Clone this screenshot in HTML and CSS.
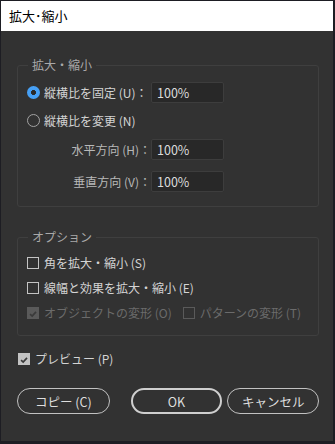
FILE: index.html
```html
<!DOCTYPE html>
<html lang="ja">
<head>
<meta charset="utf-8">
<link rel="stylesheet" href="styles.css">
</head>
<body>
<div class="window">
  <div class="titlebar">拡大･縮小</div>
  <div class="content">
    <fieldset class="group group-scale">
      <legend>拡大・縮小</legend>
      <div class="row row-uniform">
        <span class="radio radio-on"></span>
        <span class="label label-main">縦横比を固定 (U)：</span>
        <span class="field">100%</span>
      </div>
      <div class="row row-nonuniform">
        <span class="radio"></span>
        <span class="label label-main">縦横比を変更 (N)</span>
      </div>
      <div class="row row-h">
        <span class="label label-sub">水平方向 (H)：</span>
        <span class="field">100%</span>
      </div>
      <div class="row row-v">
        <span class="label label-sub">垂直方向 (V)：</span>
        <span class="field">100%</span>
      </div>
    </fieldset>
    <fieldset class="group group-options">
      <legend>オプション</legend>
      <div class="row check-row">
        <span class="check"></span>
        <span class="label label-main">角を拡大・縮小 (S)</span>
      </div>
      <div class="row check-row">
        <span class="check"></span>
        <span class="label label-main">線幅と効果を拡大・縮小 (E)</span>
      </div>
      <div class="row check-row disabled">
        <span class="check check-on check-dis"><svg viewBox="0 0 12 12" width="12" height="12"><path d="M2.5 6.2 L5 8.6 L9.6 3.4" fill="none" stroke="#3a3a3a" stroke-width="2"/></svg></span>
        <span class="label">オブジェクトの変形 (O)</span>
        <span class="check check-dis-empty second"></span>
        <span class="label">パターンの変形 (T)</span>
      </div>
    </fieldset>
    <div class="row preview-row">
      <span class="check check-on"><svg viewBox="0 0 12 12" width="12" height="12"><path d="M2.5 6.2 L5 8.6 L9.6 3.4" fill="none" stroke="#3a3a3a" stroke-width="2"/></svg></span>
      <span class="label label-main">プレビュー (P)</span>
    </div>
    <div class="buttons">
      <button class="btn btn-copy">コピー (C)</button>
      <button class="btn btn-ok">OK</button>
      <button class="btn btn-cancel">キャンセル</button>
    </div>
  </div>
</div>
</body>
</html>
```
FILE: styles.css
```css
* { box-sizing: border-box; }
html, body { margin: 0; padding: 0; }
body {
  background: #323232;
  font-family: "Noto Sans CJK JP", "Noto Sans", sans-serif;
  font-size: 12px;
  color: #d2d2d2;
}
.window {
  width: 335px;
  height: 444px;
  border-style: solid;
  border-color: #1d1d23;
  border-width: 1px 2px 3px 1px;
  background: #323232;
  display: flex;
  flex-direction: column;
}
.titlebar {
  height: 30px;
  background: #ffffff;
  color: #000000;
  font-size: 13px;
  line-height: 30px;
  padding-left: 8px;
}
.content {
  padding: 0 14px 0 16px;
  display: flex;
  flex-direction: column;
}
.group {
  margin: 0;
  border: 1px solid #3f3f3f;
  border-radius: 3px;
  padding: 0 0 0 9px;
  min-width: 0;
}
.group legend {
  padding: 0 4px;
  margin-left: 1px;
  color: #a9a9a9;
  font-size: 12px;
  line-height: 16px;
}
.group-scale {
  margin-top: 26px;
  padding-top: 9px;
  padding-bottom: 14px;
}
.group-options {
  margin-top: 22px;
  padding-top: 10px;
  padding-bottom: 14px;
}
.row {
  display: flex;
  align-items: center;
  height: 21px;
}
.row-nonuniform { margin-top: 7px; }
.row-h { margin-top: 8px; }
.row-v { margin-top: 11px; }
.label { white-space: nowrap; line-height: 16px; }
.label-main { color: #d4d4d4; }
.label-sub { color: #b8b8b8; }
.row-uniform .label { margin-left: 4px; width: 107px; }
.row-nonuniform .label { margin-left: 4px; }
.row-h .label, .row-v .label { width: 124px; text-align: right; }
.field {
  width: 73px;
  height: 21px;
  background: #282828;
  border: 1px solid #3d3d3d;
  border-radius: 2px;
  color: #dcdcdc;
  font-size: 12.5px;
  line-height: 19px;
  padding-left: 5px;
}
.radio {
  width: 13px;
  height: 13px;
  border-radius: 50%;
  border: 1.5px solid #a2a2a2;
  flex: none;
}
.radio-on {
  border: none;
  background: radial-gradient(circle, #2a2a2a 0 2.2px, #46a0f5 2.8px);
}
.check-row { height: 16px; }
.check-row + .check-row { margin-top: 9px; }
.check {
  width: 12px;
  height: 12px;
  border: 1px solid #c4c4c4;
  flex: none;
  margin-right: 5px;
  display: flex;
}
.check svg { display: block; }
.check-on { background: #c3c3c3; border-color: #c3c3c3; }
.check-dis { background: #5a5a5a; border-color: #5a5a5a; }
.check-dis-empty { border-color: #5a5a5a; }
.check.second { margin-left: 11px; }
.disabled .label { color: #6b6b6b; }
.preview-row {
  margin-top: 15px;
  height: 16px;
}
.preview-row .check { margin-left: 1px; }
.buttons {
  display: flex;
  margin-top: 21px;
}
.btn {
  height: 26px;
  border-radius: 13px;
  background: transparent;
  border: 1.5px solid #c2c2c2;
  color: #dedede;
  font-family: "Noto Sans CJK JP", "Noto Sans", sans-serif;
  font-size: 12.5px;
  padding: 0;
}
.btn-copy { width: 93px; }
.btn-ok { width: 92px; margin-left: 21px; border: 2px solid #cfcfcf; }
.btn-cancel { width: 92px; margin-left: 5px; }
```
